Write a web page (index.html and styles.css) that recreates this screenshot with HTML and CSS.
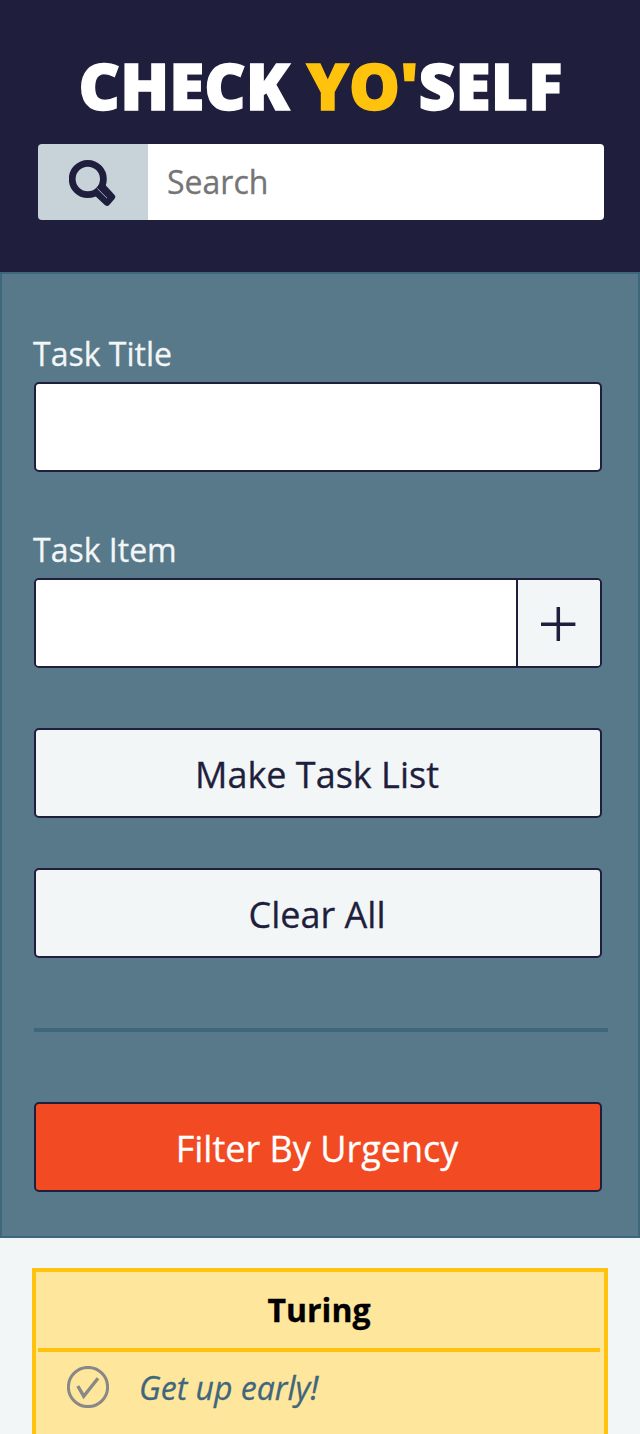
FILE: index.html
```html
<!DOCTYPE html>
<html lang="en">
<head>
<meta charset="utf-8">
<title>Check Yo'self</title>
<link rel="stylesheet" href="styles.css">
</head>
<body>
<header class="header">
  <h1 class="title">CHECK <span class="title-accent">YO'</span>SELF</h1>
  <div class="search">
    <button class="search-btn" aria-label="Search">
      <svg class="search-icon" width="48" height="48" viewBox="0 0 48 48" fill="none">
        <circle cx="18.8" cy="21" r="15.6" stroke="#1f1f3d" stroke-width="6.8"/>
        <path d="M33.2 28.2L43 38.8L38 44.6L27.6 35Z" fill="#1f1f3d" stroke="#1f1f3d" stroke-width="6.4" stroke-linejoin="round"/>
        <path d="M28.4 30.6L38 40.2" stroke="#c7d3d9" stroke-width="0.8"/>
      </svg>
    </button>
    <input class="search-input" type="text" placeholder="Search">
  </div>
</header>
<section class="panel">
  <label class="label" for="task-title">Task Title</label>
  <input class="field" id="task-title" type="text">
  <label class="label label-item" for="task-item">Task Item</label>
  <div class="field item-field">
    <input class="item-input" id="task-item" type="text">
    <button class="add-btn" aria-label="Add item">
      <svg width="36" height="36" viewBox="0 0 36 36"><path d="M1 18.2H35.4M18.3 1V35" stroke="#1f1f3d" stroke-width="3.5"/></svg>
    </button>
  </div>
  <button class="btn btn-make">Make Task List</button>
  <button class="btn btn-clear">Clear All</button>
  <hr class="divider">
  <button class="btn btn-filter">Filter By Urgency</button>
</section>
<main class="tasks">
  <article class="card">
    <h2 class="card-title">Turing</h2>
    <div class="task">
      <svg class="check" width="42" height="42" viewBox="0 0 42 42" fill="none" stroke="#888" stroke-width="3">
        <circle cx="21" cy="21" r="19.6"/>
        <path d="M10.8 20L16.7 30.2L31 12.3" stroke-width="3.4"/>
      </svg>
      <p class="task-text">Get up early!</p>
    </div>
  </article>
</main>
</body>
</html>
```
FILE: styles.css
```css
* { box-sizing: border-box; }
html { height: 100%; overflow: hidden; }
body {
  margin: 0;
  height: 100%;
  overflow: hidden;
  display: flex;
  flex-direction: column;
  background: #f2f6f7;
  font-family: "Open Sans", sans-serif;
  color: #1f1f3d;
  -webkit-text-stroke: 0.3px;
}
button, input { font-family: inherit; color: inherit; margin: 0; outline: none; }
.header {
  flex: none;
  height: 272px;
  padding: 42px 37px 0 38px;
  background: #1f1f3d;
}
.title {
  margin: 0 0 14px;
  font-size: 64px;
  line-height: 88px;
  font-weight: 800;
  text-align: center;
  white-space: nowrap;
  color: #fff;
  -webkit-text-stroke: 1.4px;
}
.title-accent { color: #ffc30d; }
.search {
  display: flex;
  width: 566px;
  height: 76px;
  border-radius: 4px;
  overflow: hidden;
}
.search-btn {
  display: flex;
  align-items: center;
  justify-content: center;
  width: 110px;
  padding: 0;
  border: 0;
  background: #c7d3d9;
}
.search-input {
  flex: 1;
  min-width: 0;
  padding: 0 19px 2px;
  border: 0;
  background: #fff;
  font-size: 32px;
}
.search-input::placeholder { color: #757575; }
.panel {
  flex: none;
  display: flex;
  flex-direction: column;
  height: 966px;
  padding: 58px 36px 0 32px;
  background: #58798a;
  border: 2px solid #3f677b;
}
.label {
  margin: 0 0 6px -1px;
  font-size: 32px;
  line-height: 44px;
  color: #f2f6f7;
}
.label-item { margin-top: 56px; }
.field {
  flex: none;
  width: 100%;
  height: 90px;
  padding: 0 16px;
  border: 2px solid #1f1f3d;
  border-radius: 5px;
  background: #fff;
  font-size: 32px;
}
.item-field { display: flex; padding: 0; overflow: hidden; }
.item-input { flex: 1; min-width: 0; padding: 0 16px; border: 0; font-size: 32px; }
.add-btn {
  display: flex;
  align-items: center;
  justify-content: center;
  width: 84px;
  padding: 2px 3px 0 0;
  border: 0;
  border-left: 2px solid #1f1f3d;
  background: #f2f6f7;
}
.btn {
  flex: none;
  height: 90px;
  padding: 2px 2px 0 0;
  border: 2px solid #1f1f3d;
  border-radius: 5px;
  background: #f2f6f7;
  font-size: 36px;
}
.btn-make { margin-top: 60px; }
.btn-clear { margin-top: 50px; }
.divider {
  flex: none;
  width: 574px;
  height: 4px;
  margin: 70px 0;
  border: 0;
  background: #3f677b;
}
.btn-filter { background: #f24b23; color: #fff; }
.tasks { flex: 1; min-height: 0; padding: 30px 32px 0; }
.card {
  height: 166px;
  padding: 0 4px 0 2px;
  background: #ffe69d;
  border: 4px solid #ffc30d;
  border-bottom: 0;
}
.card-title {
  height: 80px;
  margin: 0;
  border-bottom: 4px solid #ffc30d;
  font-size: 32px;
  line-height: 76px;
  text-align: center;
  color: #000;
}
.task { display: flex; align-items: flex-start; gap: 30px; padding: 14px 0 0 29px; }
.task-text {
  margin: 0;
  font-size: 32px;
  line-height: 44px;
  font-style: italic;
  color: #3f677b;
}
```
